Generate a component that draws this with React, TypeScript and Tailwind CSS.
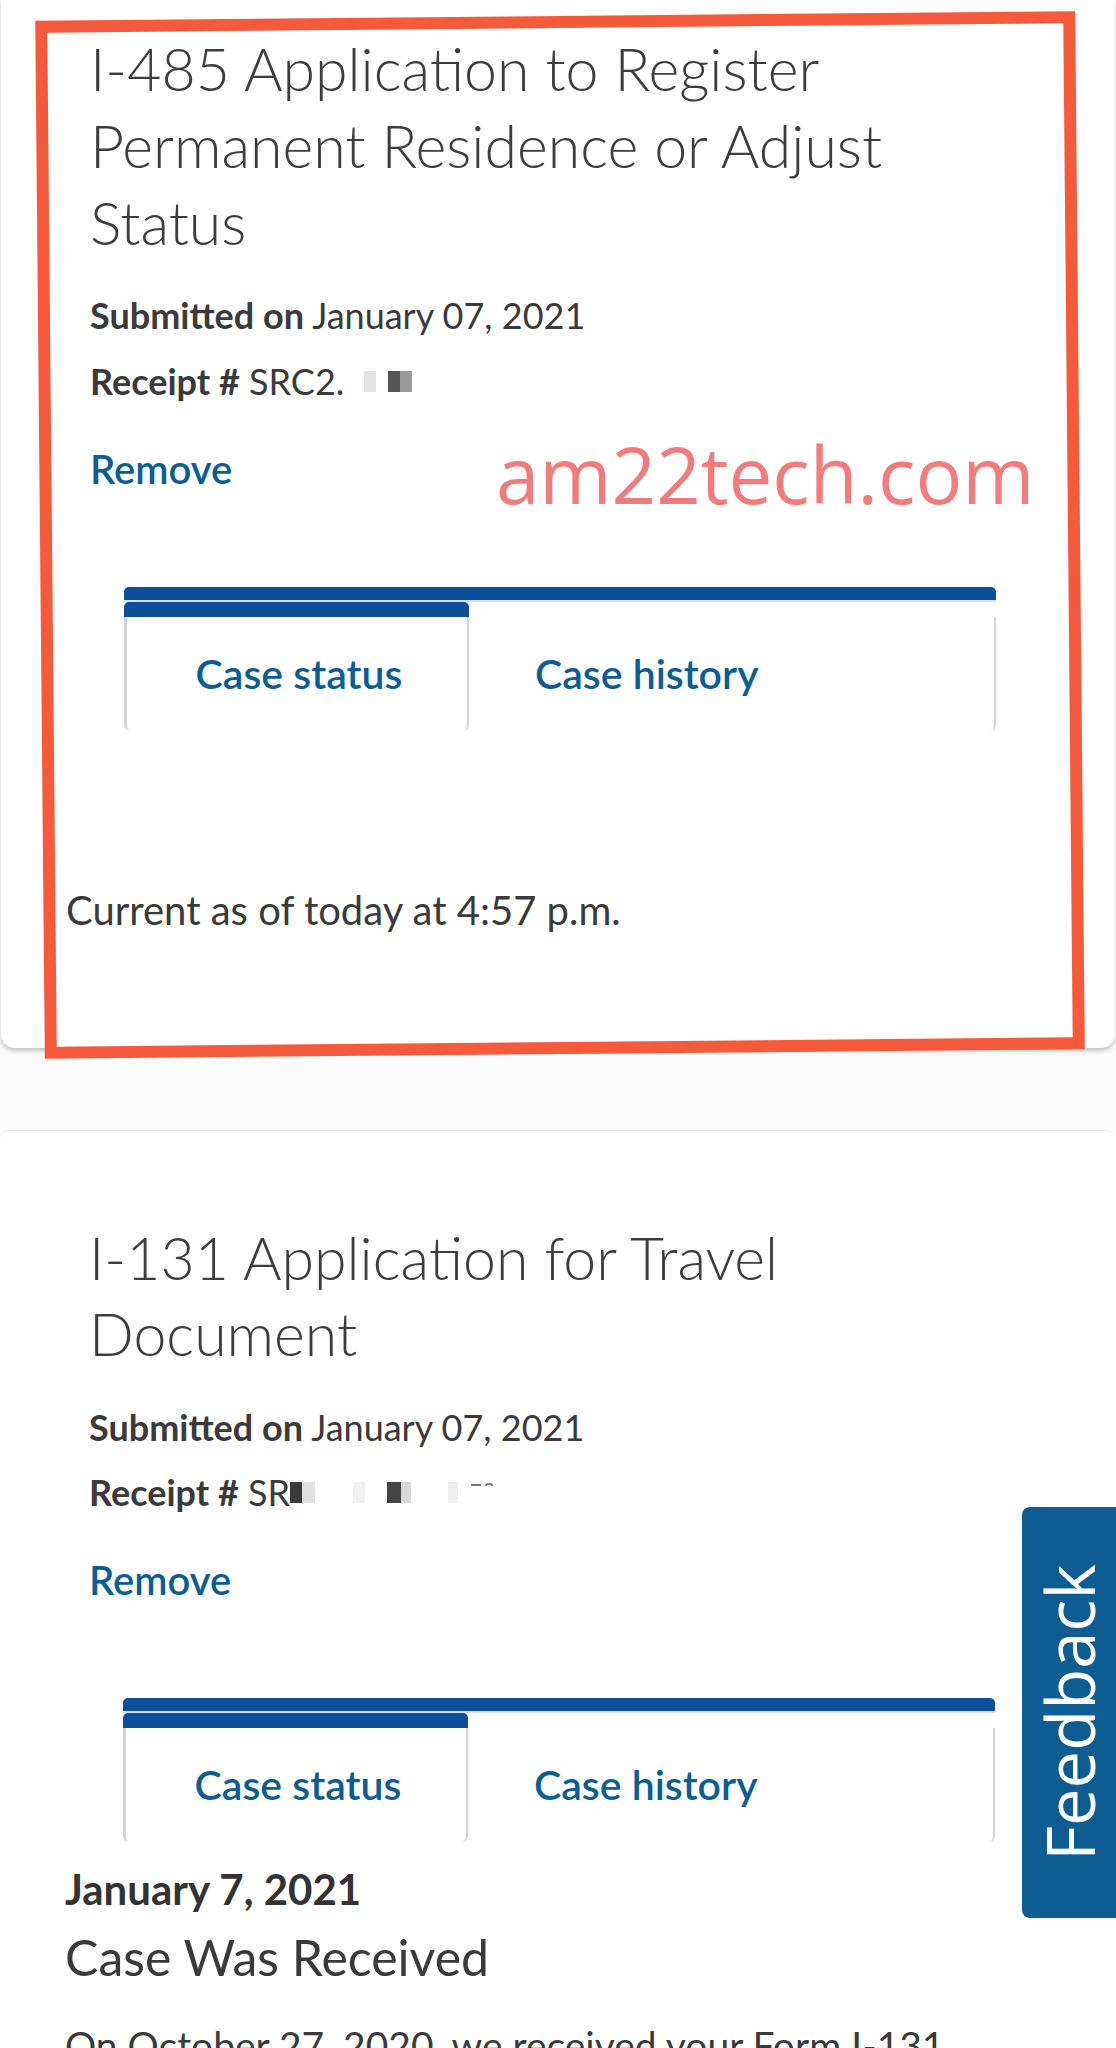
import React from "react";

const lato = "font-['Lato','Noto_Sans',sans-serif]";

const Tabs = () => {
  return (
    <div className="ml-[58px] w-[872px]">
      <div className="h-[13px] rounded-t-[5px] bg-[#0b4f9c]" />
      <div className="h-[2px] bg-[#d4e4f3]" />
      <div className="flex">
        <div className="flex w-[345px] flex-col">
          <div className="h-[15px] rounded-t-[5px] bg-[#0b4f9c]" />
          <div className="flex h-[114px] items-center justify-center rounded-b-[6px] border-l-[3px] border-r-[2px] border-[#d5d5d5] pl-[4px] text-[41px] font-semibold text-[#0a5e94]">
            Case status
          </div>
        </div>
        <div className="flex flex-1 flex-col">
          <div className="h-[15px]" />
          <div className="flex h-[114px] items-center rounded-br-[6px] border-r-[2px] border-[#d5d5d5] pl-[66px] text-[41px] font-semibold text-[#0a5e94]">
            Case history
          </div>
        </div>
      </div>
    </div>
  );
};

const Block = ({ c, w }: { c: string; w: string }) => (
  <span className={`inline-block h-[21px] ${c} ${w}`} />
);

export default function App() {
  return (
    <div className={`relative min-h-[2048px] overflow-hidden bg-[#fbfbfb] text-[#3a3a3a] ${lato}`}>
      {/* first case */}
      <div className="relative mx-[1px] rounded-b-[14px] bg-white pb-[114px] pl-[65px] pt-[30px] shadow-[0_3px_4px_rgba(0,0,0,0.22)]">
        <div className="pl-[24px]">
          <h2 className="max-w-[930px] text-[59px] font-light leading-[77px] text-[#3d3d3d]">
            I-485 Application to Register Permanent Residence or Adjust Status
          </h2>
          <p className="mt-[30px] text-[36px] leading-[48px]">
            <span className="font-bold">Submitted on</span> January 07, 2021
          </p>
          <p className="mt-[18px] flex items-center text-[36px] leading-[48px]">
            <span className="font-bold">Receipt #</span>&nbsp;SRC2.
            <Block c="ml-[20px] bg-[#e3e3e3]" w="w-[12px]" />
            <Block c="ml-[12px] bg-[#555]" w="w-[12px]" />
            <Block c="bg-[#9a9a9a]" w="w-[12px]" />
          </p>
          <p className="mt-[40px] text-[40px] font-semibold leading-[48px] text-[#0a5e94]">Remove</p>
        </div>
        <div className="mt-[94px]">
          <Tabs />
        </div>
        <p className="mt-[155px] text-[40px] leading-[48px] text-[#3a3a3a]">Current as of today at 4:57 p.m.</p>

        {/* watermark */}
        <div className="absolute left-[495px] top-[434px] font-['Open_Sans',sans-serif] text-[78px] leading-[80px] text-[#f27c7c]">
          am22tech.com
        </div>
      </div>

      {/* second case */}
      <div className="mt-[82px] rounded-t-[10px] border-t border-[#ececec] bg-white pb-[40px] pl-[65px] pt-[89px]">
        <div className="pl-[24px]">
          <h2 className="max-w-[820px] text-[59px] font-light leading-[76px] text-[#3d3d3d]">
            I-131 Application for Travel Document
          </h2>
          <p className="mt-[31px] text-[36px] leading-[48px]">
            <span className="font-bold">Submitted on</span> January 07, 2021
          </p>
          <p className="mt-[17px] flex items-center text-[36px] leading-[48px]">
            <span className="font-bold">Receipt #</span>&nbsp;SR
            <Block c="bg-[#3a3a3a]" w="w-[12px]" />
            <Block c="bg-[#e2e2e2]" w="w-[13px]" />
            <Block c="ml-[38px] bg-[#f2f2f2]" w="w-[12px]" />
            <Block c="ml-[22px] bg-[#444]" w="w-[14px]" />
            <Block c="bg-[#d8d8d8]" w="w-[10px]" />
            <Block c="ml-[37px] bg-[#eeeeee]" w="w-[10px]" />
            <span className="mb-[14px] ml-[13px] h-[2px] w-[10px] bg-[#777]" />
            <span className="mb-[16px] ml-[4px] h-[3px] w-[8px] rounded-t-full border-x-2 border-t-2 border-[#777]" />
          </p>
          <p className="mt-[40px] text-[40px] font-semibold leading-[48px] text-[#0a5e94]">Remove</p>
        </div>
        <div className="mt-[94px]">
          <Tabs />
        </div>
        <p className="mt-[25px] text-[42px] font-bold leading-[44px] text-[#333]">January 7, 2021</p>
        <p className="mt-[16px] text-[50px] leading-[60px] text-[#3a3a3a]">Case Was Received</p>
        <p className="mt-[34px] max-w-[900px] text-[39px] leading-[48px] text-[#3a3a3a]">
          On October 27, 2020, we received your Form I-131 Application for Travel Document, and sent you the receipt notice that describes how we will process your case.
        </p>
      </div>

      {/* annotation box */}
      <div className="pointer-events-none absolute left-[40px] top-[16px] h-[1038px] w-[1040px] -rotate-[0.53deg] border-[12px] border-[#f45a3b]" />

      {/* feedback tab */}
      <div className="absolute right-0 top-[1507px] flex h-[411px] w-[94px] items-center justify-center rounded-l-[8px] bg-[#0d5c92]">
        <span className="-rotate-90 whitespace-nowrap font-['Open_Sans',sans-serif] text-[67px] leading-none text-white">
          Feedback
        </span>
      </div>
    </div>
  );
}
